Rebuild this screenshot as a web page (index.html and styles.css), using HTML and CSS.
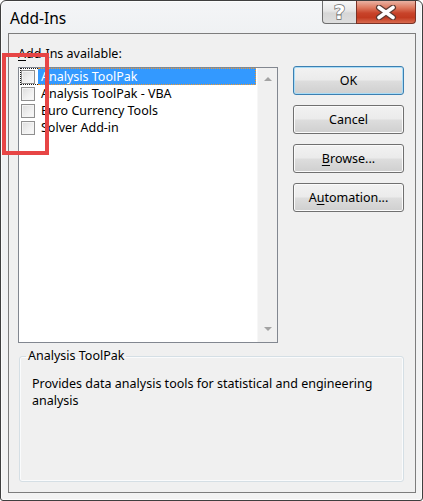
FILE: index.html
```html
<!DOCTYPE html>
<html lang="en">
<head>
<meta charset="utf-8">
<title>Add-Ins</title>
<link rel="stylesheet" href="styles.css">
</head>
<body>
<div class="window">
  <div class="titlebar">
    <span class="title">Add-Ins</span>
    <div class="caption-buttons">
      <div class="cap-btn help"><span class="qmark">?</span></div>
      <div class="cap-btn close">
        <svg class="x-icon" width="22" height="15" viewBox="0 0 22 15">
          <path d="M4 2.5 L18 12.5 M18 2.5 L4 12.5" stroke="#5c3a33" stroke-width="6" fill="none" stroke-linecap="round"/>
          <path d="M4 2.5 L18 12.5 M18 2.5 L4 12.5" stroke="#ffffff" stroke-width="3.6" fill="none" stroke-linecap="round"/>
        </svg>
      </div>
    </div>
  </div>

  <div class="client">
    <div class="top-row">
      <div class="list-col">
        <div class="list-label"><u>A</u>dd-Ins available:</div>
        <div class="listbox">
          <ul class="items">
            <li class="item selected"><span class="check"><span class="box"></span></span><span class="name">Analysis ToolPak</span></li>
            <li class="item"><span class="check"><span class="box"></span></span><span class="name">Analysis ToolPak - VBA</span></li>
            <li class="item"><span class="check"><span class="box"></span></span><span class="name">Euro Currency Tools</span></li>
            <li class="item"><span class="check"><span class="box"></span></span><span class="name">Solver Add-in</span></li>
          </ul>
          <div class="scrollbar">
            <span class="arrow up"></span>
            <span class="arrow down"></span>
          </div>
        </div>
      </div>
      <div class="buttons">
        <button class="btn default">OK</button>
        <button class="btn">Cancel</button>
        <button class="btn"><u>B</u>rowse...</button>
        <button class="btn">A<u>u</u>tomation...</button>
      </div>
    </div>

    <fieldset class="group">
      <legend>Analysis ToolPak</legend>
      <p class="desc">Provides data analysis tools for statistical and engineering analysis</p>
    </fieldset>
  </div>

  <div class="callout"></div>
</div>
</body>
</html>
```

FILE: styles.css
```css
* {
  box-sizing: border-box;
}

html, body {
  margin: 0;
  padding: 0;
  background: #ffffff;
}

body {
  font-family: "Noto Sans", "Open Sans", sans-serif;
  font-size: 12.5px;
  color: #000;
}

/* dialog frame */
.window {
  position: relative;
  width: 423px;
  height: 501px;
  border: 1px solid #3f3f3f;
  border-radius: 6px 6px 3px 3px;
  background: linear-gradient(180deg, #f4f5f7 0px, #eef0f2 40px, #f3f3f3 100%);
  box-shadow: inset 0 0 0 1px rgba(255, 255, 255, 0.75);
  padding: 0 6px 7px 7px;
  display: flex;
  flex-direction: column;
}

.titlebar {
  height: 32px;
  display: flex;
  justify-content: space-between;
  align-items: flex-start;
  flex: none;
}

.title {
  font-size: 15.5px;
  line-height: 20px;
  padding: 7px 0 0 2px;
  color: #000;
}

/* caption buttons */
.caption-buttons {
  display: flex;
  height: 23px;
}

.cap-btn {
  height: 23px;
  display: flex;
  align-items: center;
  justify-content: center;
  border: 1px solid #6f6f6f;
  border-top: none;
}

.help {
  width: 34px;
  border-right: none;
  border-radius: 0 0 0 4px;
  background: linear-gradient(180deg, #f7f7f7 0%, #e6e6e6 45%, #d6d6d6 55%, #dedede 100%);
}

.qmark {
  font-family: "DejaVu Sans", sans-serif;
  font-weight: bold;
  font-size: 20px;
  line-height: 20px;
  color: #ffffff;
  -webkit-text-stroke: 1.4px #6a6a6a;
  paint-order: stroke fill;
  margin-top: -1px;
}

.close {
  width: 60px;
  border-color: #7a3226;
  border-radius: 0 0 4px 0;
  background: linear-gradient(180deg, #eab2a3 0%, #de7a60 30%, #c8432a 55%, #c23a20 75%, #d86a4f 100%);
}

.x-icon {
  display: block;
}

/* client area */
.client {
  flex: 1;
  border: 1px solid #7d7d7d;
  background: #f0f0f0;
  padding: 12px 11px 10px 9px;
  display: flex;
  flex-direction: column;
}

.top-row {
  display: flex;
  gap: 15px;
}

.list-col {
  width: 260px;
  flex: none;
}

.list-label {
  line-height: 16px;
  height: 16px;
  margin-bottom: 5px;
}

.list-label u {
  text-decoration-thickness: 1px;
  text-underline-offset: 2px;
}

.listbox {
  height: 276px;
  border: 1px solid #828790;
  background: #ffffff;
  display: flex;
}

.items {
  list-style: none;
  margin: 0;
  padding: 0;
  flex: 1;
}

.item {
  display: flex;
  height: 17px;
  margin: 0 1px;
}

.check {
  width: 18px;
  height: 17px;
  display: flex;
  align-items: center;
  border: 1px dotted transparent;
  border-right: none;
}

.box {
  width: 14px;
  height: 14px;
  border: 1px solid #8f8f8f;
  background: linear-gradient(135deg, #dcdcdc 0%, #f1f1f1 60%, #fafafa 100%);
  box-shadow: inset 0 0 0 1px #f4f4f4;
}

.name {
  flex: 1;
  height: 17px;
  line-height: 16px;
  padding-left: 3px;
  border: 1px dotted transparent;
  border-left: none;
  white-space: nowrap;
  color: #000;
}

.selected .check {
  border-color: #1a1a1a;
}

.selected .name {
  background: #3399ff;
  color: #ffffff;
  border-color: #f39a2e;
}

.scrollbar {
  width: 20px;
  flex: none;
  background: #f0f0f0;
  border-left: 1px solid #f7f7f7;
  display: flex;
  flex-direction: column;
  justify-content: space-between;
  align-items: center;
  padding: 9px 0 11px;
}

.arrow {
  width: 0;
  height: 0;
  border-left: 4px solid transparent;
  border-right: 4px solid transparent;
}

.arrow.up {
  border-bottom: 4px solid #a3a3a3;
}

.arrow.down {
  border-top: 4px solid #a3a3a3;
}

/* command buttons */
.buttons {
  width: 111px;
  flex: none;
  margin-top: 20px;
  display: flex;
  flex-direction: column;
  gap: 10px;
}

.btn {
  height: 29px;
  width: 111px;
  font-family: inherit;
  font-size: 12.5px;
  color: #000;
  border: 1px solid #707070;
  border-radius: 3px;
  background: linear-gradient(180deg, #f2f2f2 0%, #ebebeb 48%, #dddddd 52%, #cfcfcf 100%);
  box-shadow: inset 0 0 0 1px #fbfbfb;
  padding: 0;
}

.btn u {
  text-underline-offset: 2px;
}

.btn.default {
  border-color: #3c7fb1;
  box-shadow: inset 0 0 0 1px #a9dcf6;
}

/* description group */
.group {
  flex: 1;
  margin: 5px 0 0 1px;
  padding: 11px 12px 0 12px;
  border: 1px solid #d5dfe5;
  border-radius: 3px;
  box-shadow: inset 0 0 0 1px #fafbfc;
  min-width: 0;
}

.group legend {
  margin-left: -6px;
  padding: 0 2px;
  line-height: 16px;
}

.desc {
  margin: 0;
  line-height: 17px;
}

/* red highlight drawn over the check column */
.callout {
  position: absolute;
  left: 1px;
  top: 52px;
  width: 47px;
  height: 102px;
  border: 4px solid #e74545;
}
```
